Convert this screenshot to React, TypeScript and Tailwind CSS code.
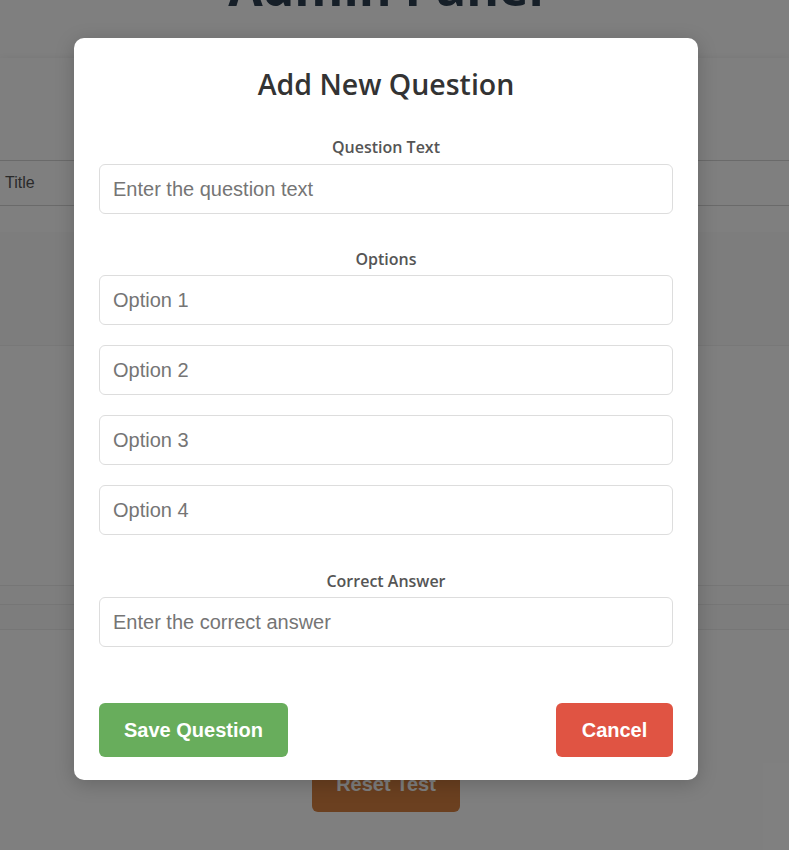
import React from "react";

export default function App() {
  const inputCls =
    "block w-full h-[50px] rounded-[6px] border border-[#dddddd] bg-white px-[13px] text-[20px] text-[#333] placeholder:text-[#757575] outline-none font-['Liberation_Sans',Arial,sans-serif]";
  const labelCls =
    "block text-center text-[16px] leading-[20px] font-semibold text-[#555555] font-['Open_Sans','Noto_Sans',sans-serif]";
  return (
    <div className="relative min-h-[850px] w-full overflow-hidden bg-white">
      {/* background page */}
      <div className="flex flex-col">
        <h1 className="mt-[-42px] h-[58px] pr-[17px] text-center text-[50px] leading-[58px] font-bold text-[#2c3e50] font-['Open_Sans','Noto_Sans',sans-serif]">
          Admin Panel
        </h1>
        <div className="mt-[42px] bg-white shadow-[0_2px_10px_rgba(0,0,0,0.1)] pt-[102px] pb-[26px]">
          <div className="flex h-[46px] items-center border-y border-[#d4d4d4] px-[5px] text-[16px] text-[#555] font-['Liberation_Sans',Arial,sans-serif]">
            Title
          </div>
        </div>
        <div className="h-[113px] bg-[#fbfbfb]" />
        <div className="h-[240px] bg-white border-t border-[#f0f0f0]" />
        <div className="h-[20px] bg-[#fdfdfd] border-y border-[#ececec]" />
        <div className="h-[25px] bg-[#fbfbfb] border-b border-[#ececec]" />
        <div className="flex justify-center pt-[126px] pr-[17px]">
          <button className="h-[56px] w-[148px] rounded-[6px] bg-[#d78141] text-[20px] font-bold text-white font-['Liberation_Sans',Arial,sans-serif]">
            Reset Test
          </button>
        </div>
      </div>

      {/* overlay */}
      <div className="absolute inset-0 bg-black/50">
        <div className="ml-[74px] mt-[38px] w-[624px] rounded-[10px] bg-white px-[25px] pt-[29px] pb-[23px] shadow-[0_4px_20px_rgba(0,0,0,0.2)]">
          <h2 className="text-center text-[28.5px] leading-[34px] font-semibold text-[#333333] font-['Open_Sans','Noto_Sans',sans-serif]">
            Add New Question
          </h2>

          <div className="mt-[36px]">
            <label className={labelCls + " mb-[7px]"}>Question Text</label>
            <input className={inputCls} placeholder="Enter the question text" />
          </div>

          <div className="mt-[35px]">
            <label className={labelCls + " mb-[6px]"}>Options</label>
            <div className="flex flex-col gap-[20px]">
              <input className={inputCls} placeholder="Option 1" />
              <input className={inputCls} placeholder="Option 2" />
              <input className={inputCls} placeholder="Option 3" />
              <input className={inputCls} placeholder="Option 4" />
            </div>
          </div>

          <div className="mt-[36px]">
            <label className={labelCls + " mb-[6px]"}>Correct Answer</label>
            <input className={inputCls} placeholder="Enter the correct answer" />
          </div>

          <div className="mt-[56px] flex items-center justify-between">
            <button className="h-[54px] w-[189px] rounded-[6px] bg-[#68ad5c] text-[20px] font-bold text-white font-['Liberation_Sans',Arial,sans-serif]">
              Save Question
            </button>
            <button className="h-[54px] w-[117px] rounded-[6px] bg-[#e05443] text-[20px] font-bold text-white font-['Liberation_Sans',Arial,sans-serif]">
              Cancel
            </button>
          </div>
        </div>
      </div>
    </div>
  );
}
